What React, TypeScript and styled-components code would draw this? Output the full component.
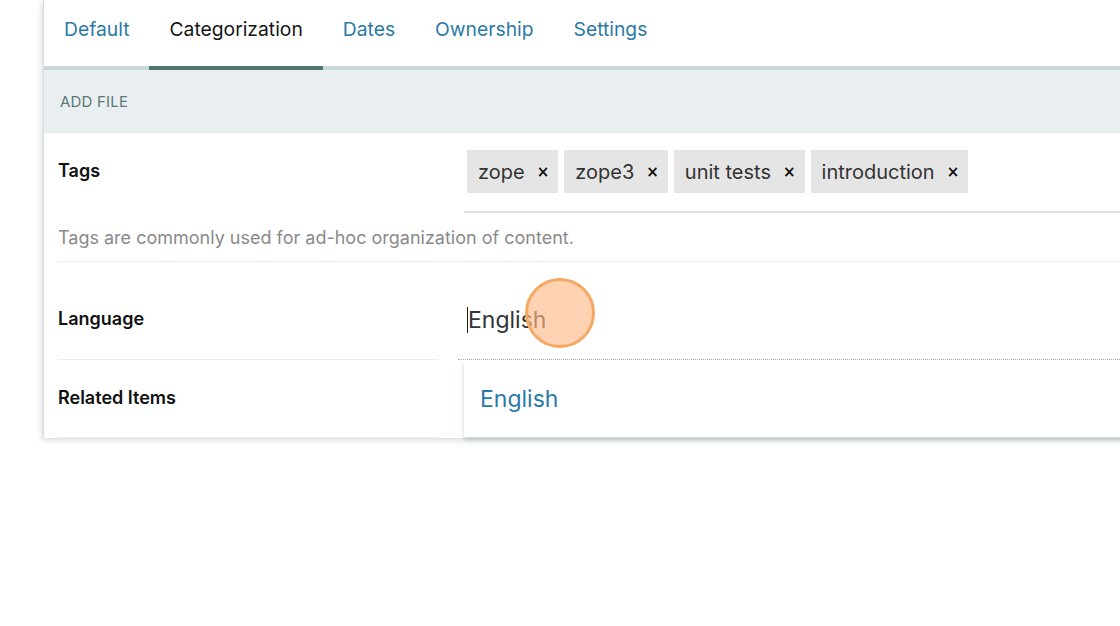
import React from "react";
import styled, { createGlobalStyle } from "styled-components";

const Global = createGlobalStyle`
  html, body { margin: 0; padding: 0; background: #ffffff; overflow: hidden; }
  body { font-family: Inter, "Noto Sans", sans-serif; width: 1120px; height: 626px; }
`;

const Page = styled.div`
  position: relative;
  width: 1120px;
  height: 626px;
  overflow: hidden;
`;

const Panel = styled.div`
  margin-left: 43px;
  width: 1120px;
  background: #fff;
  border-left: 1px solid #d3dcde;
  box-shadow: -1px 2px 6px rgba(60, 80, 90, 0.22);
`;

const TabBar = styled.nav`
  display: flex;
  height: 66px;
  border-bottom: 4px solid #c9d6da;
`;

const Tab = styled.div<{ $active?: boolean }>`
  display: flex;
  align-items: center;
  padding: 0 20px 8px;
  font-size: 19.3px;
  color: ${(p) => (p.$active ? "#151515" : "#2b7aa6")};
  margin-bottom: -4px;
  border-bottom: 4px solid ${(p) => (p.$active ? "#4e7774" : "transparent")};
`;

const SectionHead = styled.div`
  height: 63px;
  display: flex;
  align-items: center;
  padding-left: 16px;
  background: #e9eff0;
  color: #5d7778;
  font-size: 15px;
  letter-spacing: 0.2px;
`;

const Row = styled.div`
  display: flex;
  padding-left: 14px;
  gap: 20px;
`;

const LabelCell = styled.div<{ $border?: boolean; $pt: number; $h?: number }>`
  width: 380px;
  flex: none;
  padding-top: ${(p) => p.$pt}px;
  height: ${(p) => (p.$h ? `${p.$h}px` : "auto")};
  box-sizing: border-box;
  font-size: 18px;
  font-weight: 600;
  color: #111;
  border-bottom: ${(p) => (p.$border ? "1px solid #e8eeee" : "none")};
`;

const FieldCell = styled.div`
  position: relative;
  flex: 1;
`;

const TagsBox = styled.div`
  margin-left: 6px;
  padding: 17px 0 18px 3px;
  display: flex;
  gap: 6px;
  border-bottom: 2px solid #dde5e5;
`;

const Chip = styled.span`
  display: inline-flex;
  align-items: center;
  height: 43px;
  padding: 0 9px 0 11px;
  gap: 12px;
  background: #e5e5e5;
  color: #333;
  font-size: 20px;
`;

const ChipX = styled.span`
  font-size: 15px;
  font-weight: 700;
  color: #111;
  font-family: "DejaVu Sans", sans-serif;
`;

const HelpRow = styled.div`
  margin-left: 14px;
  height: 48px;
  display: flex;
  align-items: center;
  font-size: 18px;
  color: #8a8a8a;
  border-bottom: 1px solid #e9efef;
`;

const LangInput = styled.div`
  height: 98px;
  box-sizing: border-box;
  padding: 44px 0 0 9px;
  font-size: 23px;
  line-height: 28px;
  color: #333;
  display: flex;
  align-items: flex-start;
  border-bottom: 1px dotted #a9a9a9;
`;

const Caret = styled.span`
  display: inline-block;
  width: 1px;
  height: 26px;
  background: #222;
  margin-top: 1px;
`;

const Menu = styled.div`
  position: absolute;
  top: 0;
  left: 6px;
  right: 0;
  height: 77px;
  background: #fff;
  box-shadow: 0 3px 4px rgba(60, 90, 100, 0.25);
  display: flex;
  align-items: center;
  padding-left: 16px;
  font-size: 23px;
  color: #2b7aa6;
`;

const ClickMark = styled.div`
  position: absolute;
  left: 525px;
  top: 278px;
  width: 70px;
  height: 70px;
  box-sizing: border-box;
  border-radius: 50%;
  background: rgba(255, 186, 140, 0.65);
  border: 3px solid #f6a862;
  pointer-events: none;
`;

const tabs = ["Default", "Categorization", "Dates", "Ownership", "Settings"];
const tags = ["zope", "zope3", "unit tests", "introduction"];

export default function App() {
  return (
    <Page>
      <Global />
      <Panel>
        <TabBar>
          {tabs.map((t) => (
            <Tab key={t} $active={t === "Categorization"}>
              {t}
            </Tab>
          ))}
        </TabBar>
        <SectionHead>ADD FILE</SectionHead>
        <Row>
          <LabelCell $pt={27}>Tags</LabelCell>
          <FieldCell>
            <TagsBox>
              {tags.map((t) => (
                <Chip key={t}>
                  {t}
                  <ChipX>×</ChipX>
                </Chip>
              ))}
            </TagsBox>
          </FieldCell>
        </Row>
        <HelpRow>Tags are commonly used for ad-hoc organization of content.</HelpRow>
        <Row>
          <LabelCell $pt={46} $border>
            Language
          </LabelCell>
          <FieldCell>
            <LangInput>
              <Caret />
              English
            </LangInput>
          </FieldCell>
        </Row>
        <Row>
          <LabelCell $pt={27} $h={78} $border>
            Related Items
          </LabelCell>
          <FieldCell>
            <Menu>English</Menu>
          </FieldCell>
        </Row>
      </Panel>
      <ClickMark />
    </Page>
  );
}
